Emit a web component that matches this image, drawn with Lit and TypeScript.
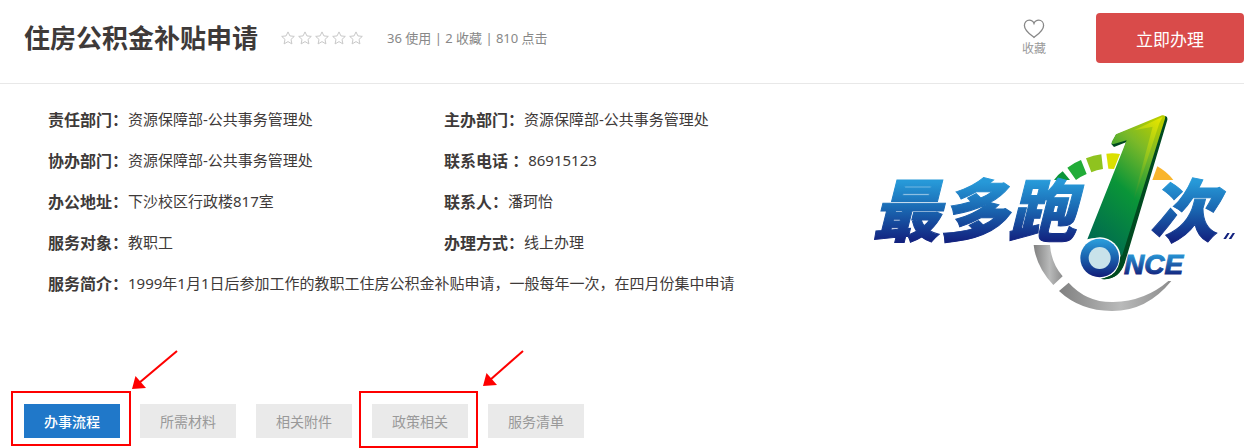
import { LitElement, html, svg, css, nothing } from "lit";
import { customElement, property, state } from "lit/decorators.js";

@customElement("campaign-logo")
class CampaignLogo extends LitElement {
  static styles = css`
    :host { display: block; flex: none; }
    svg { display: block; }
    .brush {
      font: italic 900 68px "Noto Sans CJK SC", sans-serif;
      fill: url(#ink);
      stroke: url(#ink);
      stroke-width: 1;
    }
    .once {
      font: italic 700 28px "Liberation Sans", sans-serif;
      fill: url(#inkSmall);
      stroke: url(#inkSmall);
      stroke-width: 1;
    }
  `;

  render() {
    return html`
      <svg width="372" height="204" viewBox="868 110 372 204" role="img" aria-label="最多跑1次 ONCE">
        <defs>
          <linearGradient id="ink" gradientUnits="userSpaceOnUse" x1="0" y1="182" x2="0" y2="241">
            <stop offset="0" stop-color="#2799d8" />
            <stop offset=".45" stop-color="#1a68b2" />
            <stop offset="1" stop-color="#12227f" />
          </linearGradient>
          <linearGradient id="inkSmall" gradientUnits="userSpaceOnUse" x1="0" y1="255" x2="0" y2="275">
            <stop offset="0" stop-color="#2793d3" />
            <stop offset="1" stop-color="#13257f" />
          </linearGradient>
          <linearGradient id="hand" x1=".8" y1="0" x2=".3" y2="1">
            <stop offset="0" stop-color="#b5cc00" />
            <stop offset=".22" stop-color="#7bb928" />
            <stop offset=".55" stop-color="#0a9538" />
            <stop offset="1" stop-color="#006b4f" />
          </linearGradient>
          <linearGradient id="edge" x1=".8" y1="0" x2=".5" y2="1">
            <stop offset="0" stop-color="#e2e400" />
            <stop offset=".5" stop-color="#8fc31f" />
            <stop offset="1" stop-color="#128f38" />
          </linearGradient>
          <linearGradient id="ball" x1="0" y1="0" x2="0" y2="1">
            <stop offset="0" stop-color="#2ba0dd" />
            <stop offset=".5" stop-color="#1a60ad" />
            <stop offset="1" stop-color="#121c78" />
          </linearGradient>
          <linearGradient id="steel" x1="0" y1="0" x2="1" y2="0">
            <stop offset="0" stop-color="#808080" />
            <stop offset=".55" stop-color="#b9baba" />
            <stop offset="1" stop-color="#8c8c8c" />
          </linearGradient>
        </defs>

        ${svg`<g transform="translate(1030 100) scale(.33333)">
          <path d="M72 240Q82 225 98 214L120 240Z" fill="#0a9538" />
          <path d="M112 203Q132 188 153 180L170 222Q153 229 138 240Z" fill="#22ac38" />
          <path d="M168 175Q190 166 214 163L219 207Q200 210 184 217Z" fill="#8fc31f" />
          <path d="M229 161Q250 158 270 162L252 207L235 206Z" fill="#dbe000" />
          <path d="M382 199Q412 216 430 240L367 240Z" fill="#f9b52b" />
          <path d="M11 435L60 435Q64 490 98 529L70 555Q18 500 11 435Z" fill="url(#steel)" />
          <path d="M116 548Q170 608 250 606Q345 604 415 543L424 543Q350 634 245 633Q150 632 87 573Z" fill="url(#steel)" />
        </g>`}

        <text class="brush" x="872" y="236">最多跑</text>
        <text class="brush" x="1149" y="236">次</text>
        <text class="once" x="1124" y="274">NCE</text>

        ${svg`<g transform="translate(1030 100) scale(.33333)">
          <path d="M580 417L592 399L599 399L588 417ZM596 417L608 399L615 399L604 417Z" fill="#12227f" />
          <path d="M244 132L258 104L400 48Q414 46 412 60L284 490Q266 542 215 537L170 500L288 127L252 141Z"
            fill="#004a20" />
          <path d="M172 418L290 121L249 133Q242 131 247 122L258 103L396 46Q408 44 405 56L276 468Q240 400 172 418Z" fill="url(#hand)" />
          <path d="M398 50L312 91L368 80L302 330L388 70Z" fill="url(#edge)" />
          <circle cx="210" cy="474" r="62" fill="#fff" />
          <path d="M245 526Q269 507 271 468L284 485Q266 542 215 537Z" fill="#004a20" />
          <circle cx="209" cy="474" r="58" fill="url(#ball)" />
          <circle cx="209" cy="474" r="33" fill="#c8e2ea" />
        </g>`}
      </svg>
    `;
  }
}

interface Mark {
  width: number;
  height: number;
  tip: [number, number];
  tail: number;
}

@customElement("callout-mark")
class CalloutMark extends LitElement {
  static styles = css`
    :host { position: absolute; top: -54px; left: -14px; pointer-events: none; z-index: 1; }
    svg { display: block; overflow: visible; }
    .stroke { fill: none; stroke: #fe0000; stroke-width: 2; }
    .head { fill: #fe0000; }
  `;

  @property({ attribute: false }) mark!: Mark;

  render() {
    const { width, height, tip: [x, y], tail } = this.mark;
    return html`
      <svg width="170" height="98" aria-hidden="true">
        <rect class="stroke" x="2" y="42" width=${width} height=${height} />
        <path class="stroke" d=${`M${x + tail} 1L${x + 7} ${y - 6}`} />
        <path class="head" d=${`M${x} ${y}l3.5 -13l10.5 12z`} />
      </svg>
    `;
  }
}

interface Tab {
  name: string;
  mark?: Mark;
}

const FIELDS: [string, string][] = [
  ["责任部门：", "资源保障部-公共事务管理处"],
  ["主办部门：", "资源保障部-公共事务管理处"],
  ["协办部门：", "资源保障部-公共事务管理处"],
  ["联系电话 ：", "86915123"],
  ["办公地址：", "下沙校区行政楼817室"],
  ["联系人：", "潘珂怡"],
  ["服务对象：", "教职工"],
  ["办理方式：", "线上办理"],
  ["服务简介：", "1999年1月1日后参加工作的教职工住房公积金补贴申请，一般每年一次，在四月份集中申请"],
];

const TABS: Tab[] = [
  { name: "办事流程", mark: { width: 118, height: 53, tip: [122, 39], tail: 45 } },
  { name: "所需材料" },
  { name: "相关附件" },
  { name: "政策相关", mark: { width: 117, height: 55, tip: [125, 36], tail: 40 } },
  { name: "服务清单" },
];

@customElement("app-root")
class AppRoot extends LitElement {
  static styles = css`
    :host {
      display: block;
      background: #fff;
      color: #3e3a39;
      font-family: "Noto Sans", "Noto Sans CJK SC", sans-serif;
    }
    button { font-family: inherit; border: 0; padding: 0; cursor: pointer; }
    header {
      display: flex;
      align-items: center;
      height: 83px;
      padding-left: 24px;
      border-bottom: 1px solid #e8e8e8;
    }
    .head-main { display: flex; align-items: center; flex: 1; height: 76px; align-self: flex-start; }
    h1 { margin: 0; font-size: 26px; line-height: 36px; font-weight: 700; }
    .stars { display: flex; gap: 3px; margin: 0 24px 0 23px; }
    .stars svg { display: block; fill: none; stroke: #c8c8c8; }
    .stats { font-size: 13px; line-height: 20px; color: #888; }
    .head-side { display: flex; align-items: center; align-self: flex-start; height: 76px; gap: 50px; }
    .favorite {
      display: flex;
      flex-direction: column;
      align-items: center;
      gap: 2px;
      background: none;
      color: #999;
      font-size: 12px;
      line-height: 16px;
    }
    .favorite svg { fill: none; stroke: #888; stroke-width: 1.3; }
    .apply {
      width: 148px;
      height: 50px;
      border-radius: 4px;
      background: #d94b4a;
      color: #fff;
      font-size: 17px;
    }
    .body { display: flex; gap: 28px; padding: 14px 4px 0 48px; }
    .fields {
      flex: 1;
      display: grid;
      grid-template-columns: 1fr 1fr;
      align-content: start;
      margin: 0;
    }
    .field { display: flex; align-items: center; height: 41px; white-space: nowrap; }
    .field:last-child { grid-column: 1 / -1; }
    dt { font-size: 16px; font-weight: 700; }
    dd { margin: 0; font-size: 15px; }
    campaign-logo { margin-top: 12px; }
    nav { display: flex; gap: 20px; padding: 90px 24px 10px; }
    .tab-slot { position: relative; }
    .tab {
      width: 96px;
      height: 34px;
      display: block;
      background: #eaeaea;
      color: #999;
      font-size: 14px;
    }
    .tab.active { background: #2078c9; color: #fff; font-weight: 500; }
  `;

  @state() private current = 0;

  render() {
    return html`
      <header>
        <div class="head-main">
          <h1>住房公积金补贴申请</h1>
          <div class="stars" role="img" aria-label="评分">
            ${[1, 2, 3, 4, 5].map(() => html`
              <svg width="14" height="14" viewBox="0 0 14 14">
                <path d="M7 .9L8.9 4.9L13.3 5.4L10 8.4L10.9 12.9L7 10.6L3.1 12.9L4 8.4L.7 5.4L5.1 4.9Z" />
              </svg>`)}
          </div>
          <span class="stats">36 使用 | 2 收藏 | 810 点击</span>
        </div>
        <div class="head-side">
          <button class="favorite" type="button">
            <svg width="22" height="20" viewBox="0 0 22 20">
              <path d="M11 18.4C7.5 15.5 1.4 11.6 1.4 6.4C1.4 3.2 3.7 1.2 6.2 1.2C8.4 1.2 10.2 2.4 11 4.4C11.8 2.4 13.6 1.2 15.8 1.2C18.3 1.2 20.6 3.2 20.6 6.4C20.6 11.6 14.5 15.5 11 18.4Z" />
            </svg>
            收藏
          </button>
          <button class="apply" type="button">立即办理</button>
        </div>
      </header>
      <main>
        <section class="body">
          <dl class="fields">
            ${FIELDS.map(([label, value]) => html`
              <div class="field"><dt>${label}</dt><dd>${value}</dd></div>`)}
          </dl>
          <campaign-logo></campaign-logo>
        </section>
        <nav>
          ${TABS.map((tab, i) => html`
            <div class="tab-slot">
              <button
                type="button"
                class="tab ${i === this.current ? "active" : ""}"
                @click=${() => { this.current = i; }}
              >${tab.name}</button>
              ${tab.mark ? html`<callout-mark .mark=${tab.mark}></callout-mark>` : nothing}
            </div>`)}
        </nav>
      </main>
    `;
  }
}
